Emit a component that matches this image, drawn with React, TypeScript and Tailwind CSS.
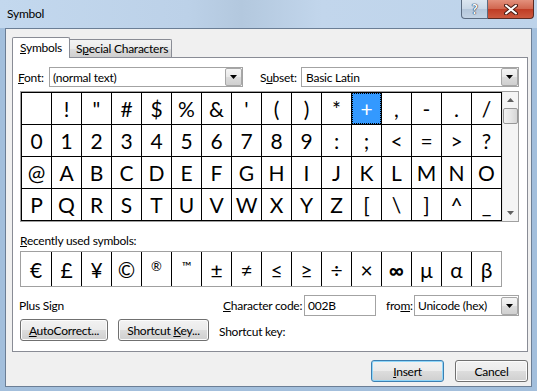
import React from "react";

const rows: string[][] = [
  [" ", "!", '"', "#", "$", "%", "&", "'", "(", ")", "*", "+", ",", "-", ".", "/"],
  ["0", "1", "2", "3", "4", "5", "6", "7", "8", "9", ":", ";", "<", "=", ">", "?"],
  ["@", "A", "B", "C", "D", "E", "F", "G", "H", "I", "J", "K", "L", "M", "N", "O"],
  ["P", "Q", "R", "S", "T", "U", "V", "W", "X", "Y", "Z", "[", "\\", "]", "^", "_"],
];

const recent = ["€", "£", "¥", "©", "®", "™", "±", "≠", "≤", "≥", "÷", "×", "∞", "µ", "α", "β"];

function DropBtn() {
  return (
    <div className="w-[17px] h-[18px] border border-[#a7a7a7] rounded-[2px] bg-[linear-gradient(#f5f5f5,#e9e9e9_50%,#dcdcdc_50%,#d0d0d0)] flex items-center justify-center shrink-0">
      <svg width="7" height="4" viewBox="0 0 7 4">
        <path d="M0 0h7L3.5 4z" fill="#000" />
      </svg>
    </div>
  );
}

function Btn({ children, cls, focus }: { children: React.ReactNode; cls: string; focus?: boolean }) {
  return (
    <div
      className={
        "h-[22px] rounded-[3px] border flex items-center justify-center whitespace-nowrap bg-[linear-gradient(#f2f2f2,#ebebeb_50%,#dddddd_50%,#cfcfcf)] " +
        (focus ? "border-[#3c7fb1] shadow-[inset_0_0_0_1px_#8fd6f9] " : "border-[#707070] shadow-[inset_0_0_0_1px_#fcfcfc] ") +
        cls
      }
    >
      {children}
    </div>
  );
}

export default function App() {
  return (
    <div className="w-[537px] h-[391px] overflow-hidden flex flex-col bg-[#a3bfdc] font-['Lato','Noto_Sans',sans-serif] text-[12px] tracking-[-0.25px] text-black leading-[15px] whitespace-nowrap">
      {/* Title bar */}
      <div className="h-[28px] shrink-0 flex items-start bg-[linear-gradient(90deg,#c3d8ee,#bcd1e8_35%,#b3c8de_45%,#c2d6ec_60%,#bdd3ea)]">
        <div className="pl-[7px] pt-[6px] text-[12px]">Symbol</div>
        <div className="ml-auto mr-[3px] flex">
          <div className="w-[27px] h-[19px] border border-[#5b6b80] border-t-0 rounded-bl-[4px] bg-[linear-gradient(#dce6f0,#c9d7e6_50%,#b4c6da_50%,#c3d3e4)] flex items-center justify-center">
            <span className="text-[13px] font-bold text-white leading-none [text-shadow:0_0_1px_#22364d,0_0_1px_#22364d,0_0_1px_#22364d]">?</span>
          </div>
          <div className="w-[46px] h-[19px] border border-[#5b2a22] border-t-0 border-l-0 rounded-br-[4px] bg-[linear-gradient(#e3907c,#d0654e_50%,#bf3b24_50%,#cc5a40)] flex items-center justify-center">
            <svg width="14" height="11" viewBox="0 0 14 11">
              <path d="M2 1.5L12 9.5M12 1.5L2 9.5" stroke="#4a1c14" strokeWidth="4" strokeLinecap="round" />
              <path d="M2 1.5L12 9.5M12 1.5L2 9.5" stroke="#fff" strokeWidth="2" strokeLinecap="round" />
            </svg>
          </div>
        </div>
      </div>

      {/* Frame body */}
      <div className="flex-1 flex pl-[5px] pr-[5px] pb-[4px]">
        <div className="flex-1 bg-[#f0f0f0] border border-[#6b7e95] flex flex-col">
          {/* Tabs */}
          <div className="pl-[6px] pt-[8px] flex items-end h-[28px]">
            <div className="relative z-10 -mb-px w-[58px] h-[21px] bg-white border border-[#898c95] border-b-0 rounded-t-[2px] pl-[7px] pt-[2px]">
              <span className="underline">S</span>ymbols
            </div>
            <div className="w-[102px] h-[18px] border border-[#898c95] border-l-0 border-b-0 rounded-tr-[2px] bg-[linear-gradient(#f3f3f3,#ebebeb_50%,#dddddd_50%,#cfcfcf)] pl-[6px] pt-px overflow-hidden">
              S<span className="underline">p</span>ecial Characters
            </div>
          </div>

          {/* Panel */}
          <div className="ml-[6px] w-[516px] h-[295px] bg-white border border-[#898c95] flex flex-col">
            {/* Font / subset row */}
            <div className="mt-[9px] flex items-center h-[20px] pl-[5px]">
              <div className="w-[31px]">
                <span className="underline">F</span>ont:
              </div>
              <div className="w-[194px] h-[20px] border border-[#a3a3a3] bg-white flex items-center pl-[3px] pr-0">
                <span className="flex-1">(normal text)</span>
                <DropBtn />
              </div>
              <div className="ml-[17px] w-[41px]">
                S<span className="underline">u</span>bset:
              </div>
              <div className="w-[218px] h-[20px] border border-[#a3a3a3] bg-white flex items-center pl-[4px] pr-0">
                <span className="flex-1">Basic Latin</span>
                <DropBtn />
              </div>
            </div>

            {/* Grid */}
            <div className="mt-[4px] ml-[7px] w-[499px] border border-[#a0a0a0] flex">
              <div className="grid grid-cols-[repeat(16,29px)] grid-rows-[repeat(4,31px)] gap-px bg-black p-px">
                {rows.flat().map((c, i) => (
                  <div
                    key={i}
                    className={
                      "flex items-center justify-center font-['Lato','Open_Sans',sans-serif] tracking-normal text-[21px] leading-none " +
                      (c === "+" ? "bg-[#3399ff] text-white outline outline-1 outline-dotted outline-black -outline-offset-1" : "bg-white")
                    }
                  >
                    {c}
                  </div>
                ))}
              </div>
              <div className="flex-1 bg-[#f4f4f4] flex flex-col items-center border-l border-[#e6e6e6]">
                <div className="h-[16px] flex items-center justify-center">
                  <svg width="7" height="4" viewBox="0 0 7 4">
                    <path d="M3.5 0L7 4H0z" fill="#606060" />
                  </svg>
                </div>
                <div className="w-[15px] h-[16px] rounded-[2px] border border-[#979797] bg-[linear-gradient(90deg,#f2f2f2,#e6e6e6_50%,#d6d6d6)]" />
                <div className="flex-1" />
                <div className="h-[16px] flex items-center justify-center">
                  <svg width="7" height="4" viewBox="0 0 7 4">
                    <path d="M0 0h7L3.5 4z" fill="#606060" />
                  </svg>
                </div>
              </div>
            </div>

            {/* Recently used */}
            <div className="mt-[11px] ml-[7px]">
              <span className="underline">R</span>ecently used symbols:
            </div>
            <div className="mt-[3px] ml-[7px] w-[482px] h-[36px] border border-[#a0a0a0] flex">
              {recent.map((c, i) => (
                <div
                  key={i}
                  className={
                    "w-[30px] h-full flex justify-center font-['Lato','Open_Sans',sans-serif] tracking-normal leading-none " +
                    (i > 0 ? "border-l border-black " : "") +
                    (c === "®" || c === "™" ? "items-start pt-[8px] text-[13px] " : "items-center text-[21px] ") +
                    (c === "∞" ? "font-bold " : "")
                  }
                >
                  {c}
                </div>
              ))}
            </div>

            {/* Char code row */}
            <div className="mt-[8px] flex items-center h-[21px] pl-[6px]">
              <div className="w-[204px]">Plus Sign</div>
              <div className="w-[81px]">
                <span className="underline">C</span>haracter code:
              </div>
              <div className="w-[72px] h-[21px] border border-[#a3a3a3] bg-white flex items-center pl-[3px]">002B</div>
              <div className="ml-[10px] w-[28px]">
                fro<span className="underline">m</span>:
              </div>
              <div className="w-[105px] h-[21px] border border-[#a3a3a3] bg-white flex items-center pl-[3px]">
                <span className="flex-1">Unicode (hex)</span>
                <DropBtn />
              </div>
            </div>

            {/* Buttons row */}
            <div className="mt-[3px] flex items-center pl-[7px]">
              <Btn cls="w-[88px]">
                <span>
                  <span className="underline">A</span>utoCorrect...
                </span>
              </Btn>
              <Btn cls="ml-[10px] w-[91px]">
                <span>
                  Shortcut <span className="underline">K</span>ey...
                </span>
              </Btn>
              <div className="ml-[10px] pt-[2px]">Shortcut key:</div>
            </div>
          </div>

          {/* Bottom buttons */}
          <div className="ml-[6px] w-[516px] mt-[8px] flex justify-end gap-[11px]">
            <Btn cls="w-[73px]" focus>
              <span>
                <span className="underline">I</span>nsert
              </span>
            </Btn>
            <Btn cls="w-[73px]">Cancel</Btn>
          </div>
        </div>
      </div>
    </div>
  );
}
